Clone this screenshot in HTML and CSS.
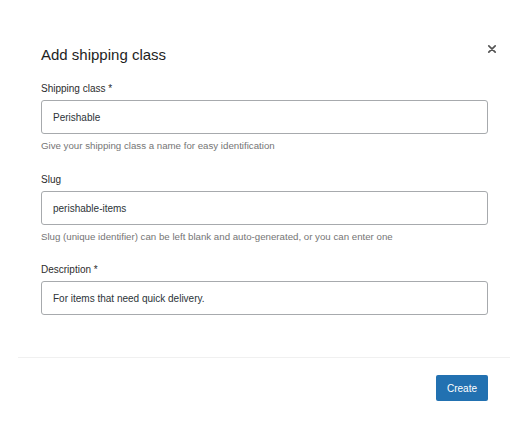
FILE: index.html
```html
<!DOCTYPE html>
<html lang="en">
<head>
    <meta charset="UTF-8">
    <meta name="viewport" content="width=device-width, initial-scale=1.0">
    <title>Add shipping class</title>
    <link rel="stylesheet" href="styles.css">
</head>
<body>
    <div class="modal">
        <div class="modal-header">
            <h1 class="modal-title">Add shipping class</h1>
            <button class="close-btn" aria-label="Close">
                <svg width="10" height="10" viewBox="0 0 10 10">
                    <path d="M1.8 1.8 L8.2 8.2 M8.2 1.8 L1.8 8.2" stroke="#555" stroke-width="1.7" stroke-linecap="round"/>
                </svg>
            </button>
        </div>

        <form class="modal-body">
            <div class="field">
                <label class="field-label" for="class-name">Shipping class *</label>
                <input class="field-input" id="class-name" type="text" value="Perishable">
                <div class="field-help">Give your shipping class a name for easy identification</div>
            </div>
            <div class="field">
                <label class="field-label" for="class-slug">Slug</label>
                <input class="field-input" id="class-slug" type="text" value="perishable-items">
                <div class="field-help">Slug (unique identifier) can be left blank and auto-generated, or you can enter one</div>
            </div>
            <div class="field">
                <label class="field-label" for="class-desc">Description *</label>
                <input class="field-input" id="class-desc" type="text" value="For items that need quick delivery.">
            </div>
        </form>

        <div class="modal-footer">
            <button class="btn-primary" type="button">Create</button>
        </div>
    </div>
</body>
</html>
```

FILE: styles.css
```css
body {
    margin: 0;
    font-family: 'Liberation Sans', Arial, sans-serif;
    background-color: #fff;
    color: #1e1e1e;
}
.modal {
    width: 492px;
    margin-left: 18px;
    padding-top: 45px;
}
.modal-header {
    position: relative;
    padding: 0 22px 0 23px;
}
.modal-title {
    margin: 0;
    font-size: 15px;
    font-weight: 400;
    line-height: 20px;
    color: #1e1e1e;
}
.close-btn {
    position: absolute;
    top: -2px;
    right: 12px;
    width: 12px;
    height: 12px;
    padding: 0;
    border: none;
    background: none;
    display: flex;
    justify-content: center;
    align-items: center;
    cursor: pointer;
}
.modal-body {
    padding: 17px 22px 42px 23px;
}
.field {
    display: flex;
    flex-direction: column;
    margin-bottom: 19px;
}
.field:first-child {
    margin-bottom: 20px;
}
.field:last-child {
    margin-bottom: 0;
}
.field-label {
    font-size: 10px;
    line-height: 14px;
    color: #2c2c2c;
    margin-bottom: 4px;
}
.field-input {
    box-sizing: border-box;
    height: 34px;
    padding: 0 11px;
    border: 1px solid #a7aaad;
    border-radius: 3px;
    font-family: inherit;
    font-size: 10px;
    color: #2c3338;
    background: #fff;
}
.field-help {
    font-size: 9.7px;
    line-height: 14px;
    color: #757575;
    margin-top: 5px;
}
.modal-footer {
    border-top: 1px solid #f0f0f0;
    padding: 17px 22px 29px 23px;
    display: flex;
    justify-content: flex-end;
}
.btn-primary {
    height: 26px;
    padding: 0 11px;
    border: none;
    border-radius: 2px;
    background-color: #2271b1;
    color: #fff;
    font-family: inherit;
    font-size: 10px;
    cursor: pointer;
}
```
